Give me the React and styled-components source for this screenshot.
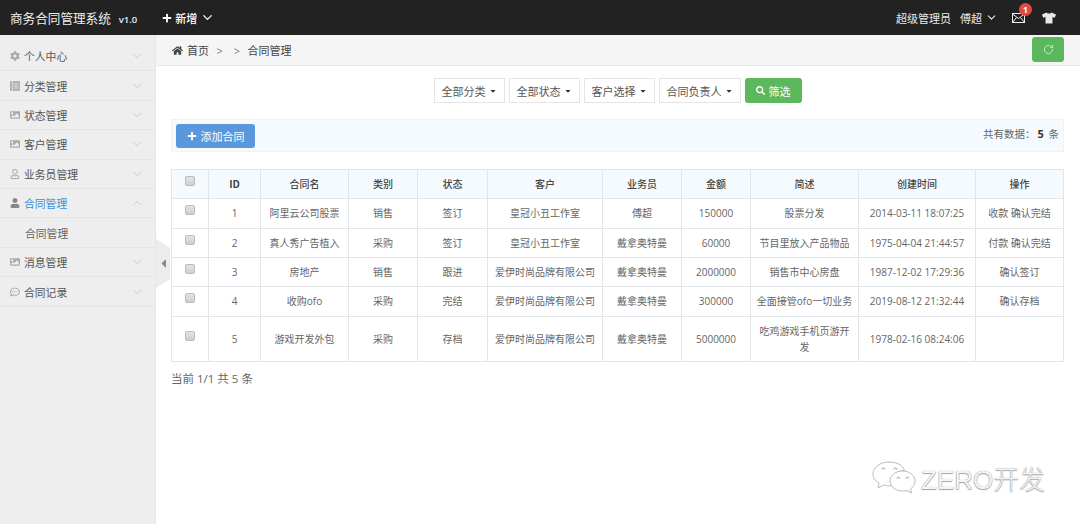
import React from 'react'
import styled, { createGlobalStyle } from 'styled-components'
import {
  FaCaretLeft, FaCaretDown, FaCog, FaHome, FaPlus, FaRegCommentDots, FaImage, FaRegUser,
  FaSearch, FaTshirt, FaUser,
} from 'react-icons/fa'
import { ChevronDown, ChevronUp, RotateCw } from 'lucide-react'

const GlobalStyle = createGlobalStyle`
  html, body { margin: 0; padding: 0; background: #fff; }
  body {
    font-family: "Open Sans", "Noto Sans CJK SC", sans-serif;
    font-size: 10px;
    color: #555;
    overflow: hidden;
  }
  * { box-sizing: border-box; }
`

const BookIcon = () => (
  <svg viewBox="0 0 10 10">
    <rect x="0" y="0" width="10" height="10" fill="#b4b4b4" />
    <path d="M2.500 0v10M4 3h4.500M4 5h4.500M4 7h4.500" stroke="#e2e2e2" strokeWidth="0.8" />
  </svg>
)

const menu = [
  { icon: <FaCog />, label: '个人中心' },
  { icon: <BookIcon />, label: '分类管理' },
  { icon: <FaImage />, label: '状态管理' },
  { icon: <FaImage />, label: '客户管理' },
  { icon: <FaRegUser />, label: '业务员管理' },
  { icon: <FaUser />, label: '合同管理', active: true, sub: '合同管理' },
  { icon: <FaImage />, label: '消息管理' },
  { icon: <FaRegCommentDots />, label: '合同记录' },
]

const columns = [
  ['', 37], ['ID', 52], ['合同名', 88], ['类别', 69], ['状态', 70], ['客户', 115],
  ['业务员', 79], ['金额', 69], ['简述', 108], ['创建时间', 117], ['操作', 88],
]

const rowHeights = [30, 29, 29, 30, 45]

const rows = [
  ['1', '阿里云公司股票', '销售', '签订', '皇冠小丑工作室', '傅超', '150000', '股票分发', '2014-03-11 18:07:25', '收款 确认完结'],
  ['2', '真人秀广告植入', '采购', '签订', '皇冠小丑工作室', '戴拿奥特曼', '60000', '节目里放入产品物品', '1975-04-04 21:44:57', '付款 确认完结'],
  ['3', '房地产', '销售', '跟进', '爱伊时尚品牌有限公司', '戴拿奥特曼', '2000000', '销售市中心房盘', '1987-12-02 17:29:36', '确认签订'],
  ['4', '收购ofo', '采购', '完结', '爱伊时尚品牌有限公司', '戴拿奥特曼', '300000', '全面接管ofo一切业务', '2019-08-12 21:32:44', '确认存档'],
  ['5', '游戏开发外包', '采购', '存档', '爱伊时尚品牌有限公司', '戴拿奥特曼', '5000000', '吃鸡游戏手机页游开发', '1978-02-16 08:24:06', ''],
]

const filters = ['全部分类', '全部状态', '客户选择', '合同负责人']

const Page = styled.div`
  width: 1080px;
  height: 524px;
  display: grid;
  grid-template-rows: 35px 1fr;
  position: relative;
  overflow: hidden;
`

const Header = styled.header`
  background: #222;
  color: #fff;
  display: flex;
  align-items: center;
  padding: 0 24px 0 10px;
`

const Brand = styled.div`
  font-size: 12.6px;
  color: #eee;
  white-space: nowrap;
  small {
    font-size: 9.5px;
    font-weight: 600;
    margin-left: 8px;
  }
`

const AddMenu = styled.div`
  display: flex;
  align-items: center;
  gap: 3px;
  margin-left: 25px;
  font-size: 11px;
  font-weight: 500;
  svg { flex: none; }
`

const HeaderRight = styled.div`
  margin-left: auto;
  display: flex;
  align-items: center;
  font-size: 11px;
  color: #e8e8e8;
`

const UserName = styled.span`
  margin-left: 9px;
  margin-right: 3px;
`

const MailIcon = styled.div`
  position: relative;
  display: flex;
  margin-left: 14px;
  margin-right: 17px;
`

const Badge = styled.span`
  position: absolute;
  top: -10px;
  right: -7px;
  width: 13px;
  height: 13px;
  border-radius: 50%;
  background: #e04b45;
  color: #fff;
  font-size: 8.5px;
  font-weight: 700;
  line-height: 13px;
  text-align: center;
`

const Body = styled.div`
  display: flex;
  min-height: 0;
`

const Sidebar = styled.aside`
  width: 156px;
  flex: none;
  background: #eee;
  border-right: 1px solid #e5e5e5;
  padding-top: 7px;
`

const MenuRow = styled.div`
  height: 29.4px;
  display: flex;
  align-items: center;
  padding: 0 11px 0 10px;
  border-bottom: 1px solid #e6e6e6;
  font-size: 10.8px;
  color: ${p => (p.$active ? '#3d8fdb' : '#555')};
  > svg:first-child {
    width: 10px;
    height: 10px;
    margin-right: 4px;
    color: ${p => (p.$active ? '#888' : '#aaa')};
  }
  > span { flex: 1; }
`

const SubRow = styled.div`
  height: 29.6px;
  padding-left: 25px;
  display: flex;
  align-items: center;
  font-size: 10.8px;
  color: #666;
  border-bottom: 1px solid #e6e6e6;
`

const CollapseHandle = styled.div`
  position: absolute;
  left: 156px;
  top: 239px;
  width: 14px;
  height: 49px;
  background: #ececec;
  clip-path: polygon(0 0, 100% 18%, 100% 82%, 0 100%);
  display: flex;
  align-items: center;
  justify-content: center;
  color: #888;
  font-size: 13px;
`

const Main = styled.main`
  flex: 1;
  min-width: 0;
`

const Crumbs = styled.div`
  height: 31px;
  background: #f5f5f5;
  border-bottom: 1px solid #e9e9e9;
  display: flex;
  align-items: center;
  padding: 0 16px 0 16px;
  font-size: 11px;
  color: #444;
  gap: 4px;
  svg { font-size: 11px; }
`

const Sep = styled.span`
  margin: 0 3.5px;
  color: #777;
`

const RefreshButton = styled.button`
  margin-left: auto;
  width: 32px;
  height: 25px;
  margin-top: -1px;
  border: 1px solid #5cb85c;
  border-radius: 3px;
  background: #5cb85c;
  color: #e6f4e6;
  display: flex;
  align-items: center;
  justify-content: center;
  padding: 0;
`

const Content = styled.div`
  padding: 12px 16px 0 15px;
`

const FilterBar = styled.div`
  display: flex;
  justify-content: center;
  gap: 4px;
  height: 25px;
`

const Select = styled.div`
  display: flex;
  align-items: center;
  gap: 3px;
  padding: 0 7px;
  background: #fff;
  border: 1px solid #e5e5e5;
  font-size: 11px;
  color: #555;
  svg { font-size: 8px; color: #333; }
`

const FilterButton = styled.button`
  width: 57px;
  border: none;
  border-radius: 3px;
  background: #5cb85c;
  color: #fff;
  font: inherit;
  font-size: 11px;
  display: flex;
  align-items: center;
  justify-content: center;
  gap: 4px;
  padding: 0;
  svg { font-size: 9px; }
`

const Toolbar = styled.div`
  margin-top: 16px;
  height: 33px;
  background: #f5fafe;
  border: 1px solid #eef3f7;
  display: flex;
  align-items: center;
  justify-content: space-between;
  padding: 0 4px;
  font-size: 10.5px;
  b { color: #333; font-size: 11px; margin: 0 2px; }
`

const AddButton = styled.button`
  width: 79px;
  height: 24px;
  border: none;
  border-radius: 3px;
  background: #5a98de;
  color: #fff;
  font: inherit;
  font-size: 11px;
  display: flex;
  align-items: center;
  justify-content: center;
  gap: 4px;
  padding: 0;
  svg { font-size: 10px; }
`

const Total = styled.div`
  margin-top: -5px;
  color: #666;
`

const Table = styled.table`
  margin-top: 17px;
  width: 893px;
  table-layout: fixed;
  border-collapse: collapse;
  font-size: 10px;
  color: #666;
  th, td {
    border: 1px solid #e3e6e8;
    text-align: center;
    padding: 0 5px;
    line-height: 16.5px;
  }
`

const HeadCell = styled.th`
  width: ${p => p.$w}px;
  height: 29px;
  background: #f5fafe;
  color: #444;
  font-weight: ${p => (p.$bold ? 700 : 500)};
  font-size: 10px;
`

const Row = styled.tr`
  height: ${p => p.$h}px;
`

const Check = styled.span`
  display: inline-block;
  width: 10px;
  height: 10px;
  vertical-align: 2px;
  border: 1px solid #bbb;
  border-radius: 2px;
  background: linear-gradient(#e4e4e4, #cfcfcf);
`

const Pager = styled.div`
  margin-top: 8px;
  font-size: 11.5px;
  color: #666;
`

const Watermark = styled.div`
  position: absolute;
  left: 872px;
  top: 459px;
  display: flex;
  align-items: center;
  gap: 5px;
  font-size: 26px;
  font-family: "Liberation Sans", "Noto Sans CJK SC", sans-serif;
  font-weight: 300;
  color: #f4f4f4;
  text-shadow: 0 0 1px #777, 0 1px 1px #aaa;
`

const MailGlyph = () => (
  <svg width="13" height="10" viewBox="0 0 13 10" fill="none" stroke="#eee" strokeWidth="1">
    <rect x="0.500" y="0.500" width="12" height="9" />
    <path d="M0.500 1l6 4.500 6-4.500M0.500 9.500l4-5M12.500 9.500l-4-5" />
  </svg>
)

const WechatMark = () => (
  <svg width="44" height="34" viewBox="0 0 44 34" fill="#fff" stroke="#bbb" strokeWidth="1">
    <path d="M17 1C8 1 1 6.500 1 13c0 3.800 2.400 7 6 9.200L6 27l5.500-2.900c1.800.5 3.600.8 5.500.8 1 0 2-.1 3-.3-.5-1.300-.8-2.600-.8-4 0-6.300 6-11 13.300-11C31 4.200 24.700 1 17 1z" />
    <path d="M43 20c0-5.500-5.500-10-12.500-10S18 14.500 18 20s5.500 10 12.500 10c1.500 0 3-.2 4.300-.6L39.500 32l-1-4c2.800-1.900 4.500-4.800 4.500-8z" />
    <g fill="none" stroke="#999">
      <path d="M10 8.500a1.500 1.500 0 0 1 3 0M22 8.500a1.500 1.500 0 0 1 3 0M25 17.500a1.300 1.300 0 0 1 2.600 0M34 17.500a1.300 1.300 0 0 1 2.600 0" />
    </g>
  </svg>
)

const App = () => {
  return (
    <Page>
      <GlobalStyle />
      <Header>
        <Brand>商务合同管理系统<small>v1.0</small></Brand>
        <AddMenu><FaPlus size={10} /> 新增 <ChevronDown size={15} /></AddMenu>
        <HeaderRight>
          超级管理员
          <UserName>傅超</UserName>
          <ChevronDown size={13} />
          <MailIcon><MailGlyph /><Badge>1</Badge></MailIcon>
          <FaTshirt size={14} />
        </HeaderRight>
      </Header>
      <Body>
        <Sidebar>
          {menu.map(m => (
            <React.Fragment key={m.label}>
              <MenuRow $active={m.active}>
                {m.icon}
                <span>{m.label}</span>
                {m.active
                  ? <ChevronUp size={14} strokeWidth={1.2} color="#bbb" />
                  : <ChevronDown size={14} strokeWidth={1.2} color="#bbb" />}
              </MenuRow>
              {m.sub && <SubRow>{m.sub}</SubRow>}
            </React.Fragment>
          ))}
        </Sidebar>
        <Main>
          <Crumbs>
            <FaHome />
            首页
            <Sep>&gt;</Sep>
            <Sep>&gt;</Sep>
            合同管理
            <RefreshButton><RotateCw size={11} strokeWidth={1.6} /></RefreshButton>
          </Crumbs>
          <Content>
            <FilterBar>
              {filters.map(f => <Select key={f}>{f} <FaCaretDown /></Select>)}
              <FilterButton><FaSearch /> 筛选</FilterButton>
            </FilterBar>
            <Toolbar>
              <AddButton><FaPlus /> 添加合同</AddButton>
              <Total>共有数据：<b>5</b> 条</Total>
            </Toolbar>
            <Table>
              <thead>
                <tr>
                  {columns.map(([name, w], i) => (
                    <HeadCell key={i} $w={w} $bold={name === 'ID'}>{i === 0 ? <Check /> : name}</HeadCell>
                  ))}
                </tr>
              </thead>
              <tbody>
                {rows.map((r, i) => (
                  <Row key={r[0]} $h={rowHeights[i]}>
                    <td><Check /></td>
                    {r.map((c, j) => <td key={j}>{c}</td>)}
                  </Row>
                ))}
              </tbody>
            </Table>
            <Pager>当前 1/1 共 5 条</Pager>
          </Content>
        </Main>
      </Body>
      <CollapseHandle><FaCaretLeft /></CollapseHandle>
      <Watermark><WechatMark />ZERO开发</Watermark>
    </Page>
  )
}

export default App
